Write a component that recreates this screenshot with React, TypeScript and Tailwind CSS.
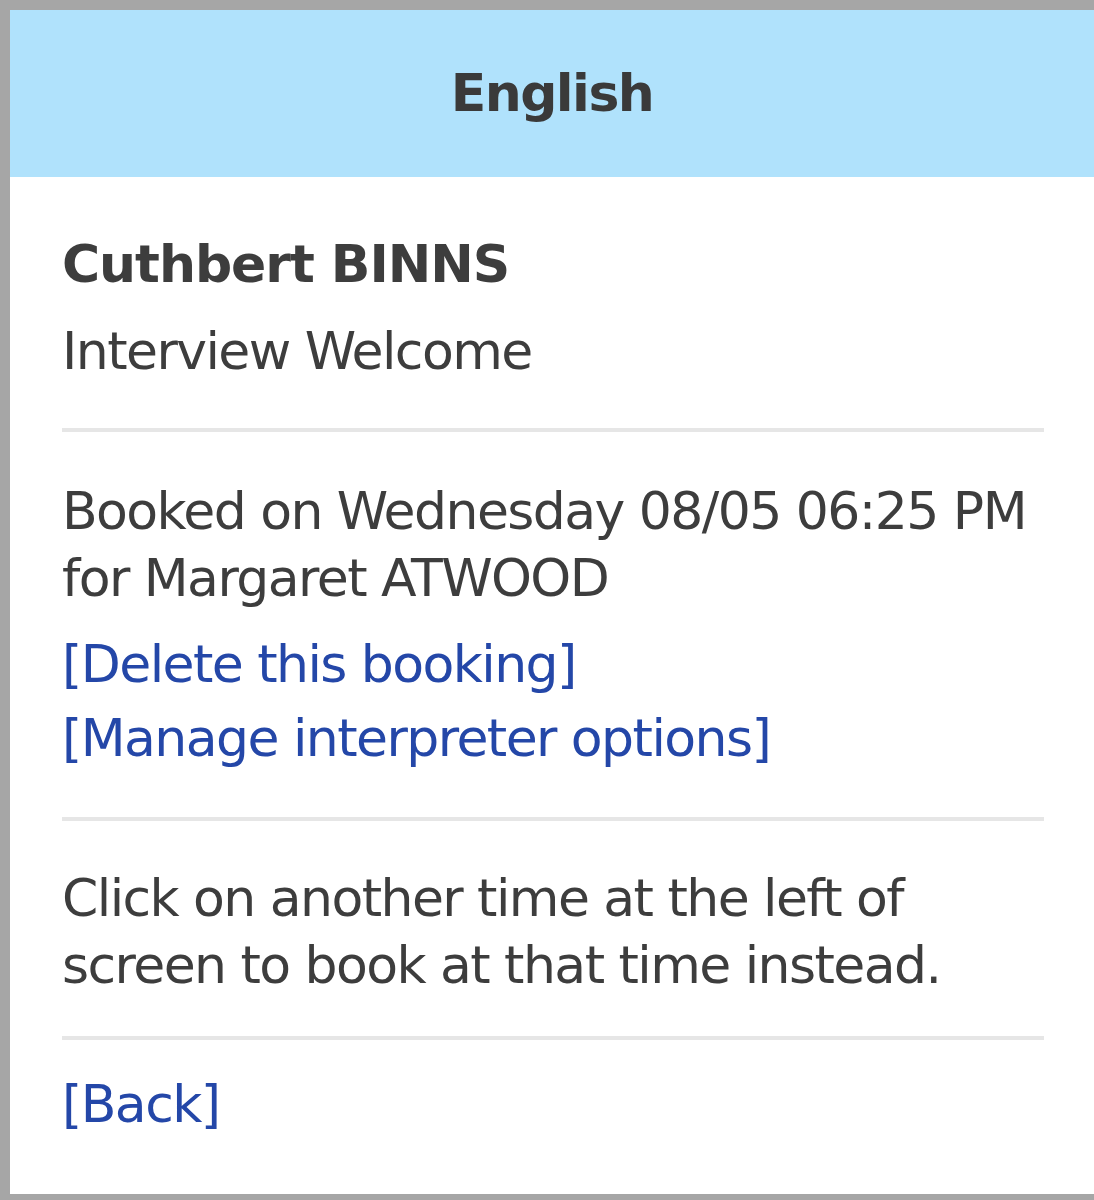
export default function App() {
  const font = { fontFamily: '"DejaVu Sans", Verdana, sans-serif' }

  return (
    <div
      className="w-[1094px] h-[1200px] bg-white border-t-[10px] border-l-[10px] border-b-[6px] border-[#a6a6a6] flex flex-col text-[52px] leading-[67px] text-[#3d3d3d] tracking-[-0.03em]"
      style={font}
    >
      {/* Header */}
      <div className="h-[167px] bg-[#b0e2fc] flex items-center justify-center font-bold tracking-[-0.03em] text-[#3a3a3a]">
        English
      </div>

      {/* Details */}
      <div className="pl-[52px] pr-[50px]">
        <div className="mt-[54px] font-bold tracking-[-0.02em]">Cuthbert BINNS</div>
        <div className="mt-[20px]">Interview Welcome</div>

        <hr className="mt-[43px] border-0 h-[4px] bg-[#e6e6e6]" />

        <div className="mt-[46px]">
          Booked on Wednesday 08/05 06:25 PM
          <br />
          for Margaret ATWOOD
        </div>
        <div className="mt-[19px] flex flex-col gap-[7px] text-[#2447a8]">
          <a href="#">[Delete this booking]</a>
          <a href="#">[Manage interpreter options]</a>
        </div>

        <hr className="mt-[45px] border-0 h-[4px] bg-[#e6e6e6]" />

        <div className="mt-[44px]">
          Click on another time at the left of
          <br />
          screen to book at that time instead.
        </div>

        <hr className="mt-[37px] border-0 h-[4px] bg-[#e6e6e6]" />

        <a href="#" className="block mt-[31px] text-[#2447a8]">
          [Back]
        </a>
      </div>
    </div>
  )
}
